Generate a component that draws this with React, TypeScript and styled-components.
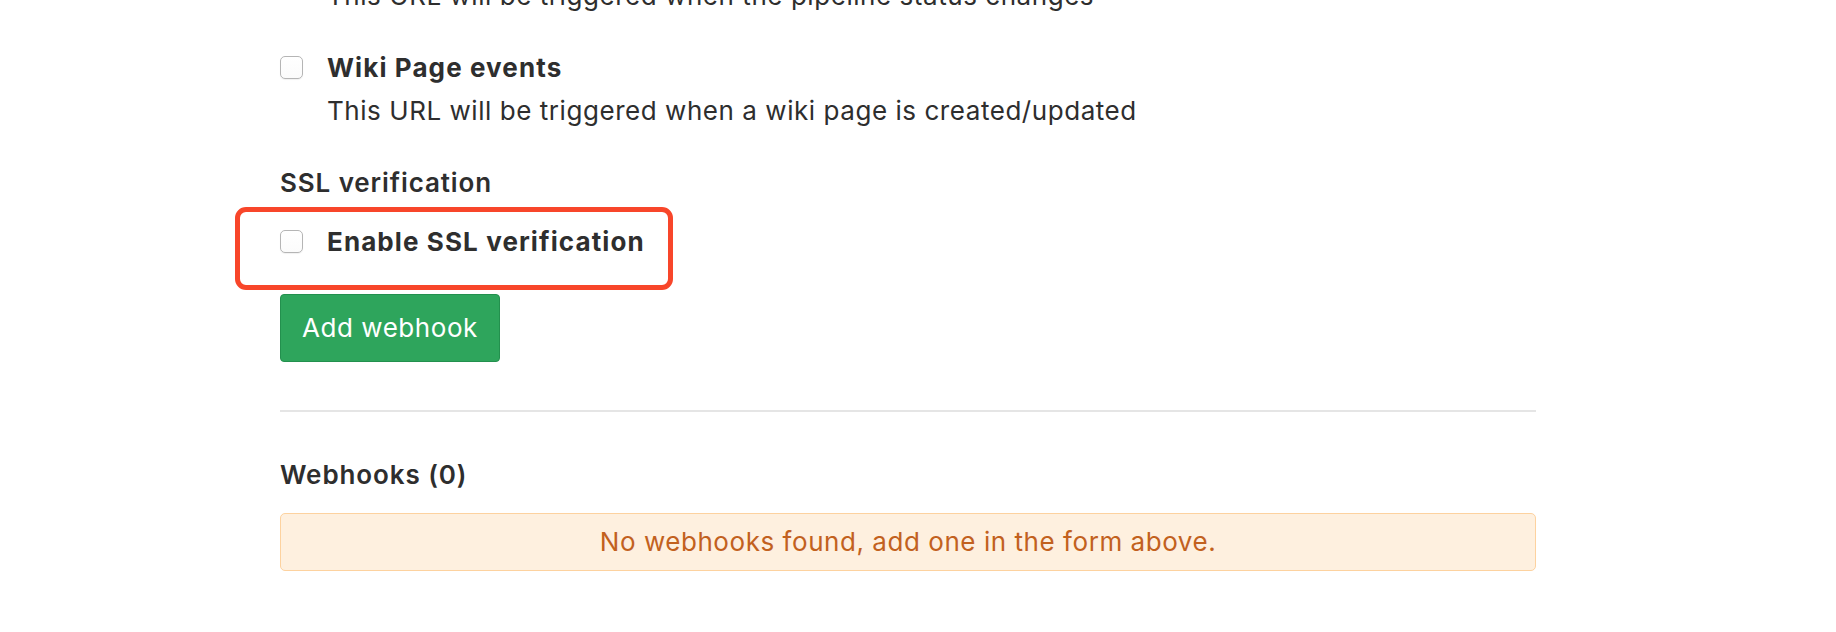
import React from "react";
import styled, { createGlobalStyle } from "styled-components";

const Global = createGlobalStyle`
  html, body { margin: 0; padding: 0; background: #ffffff; }
  body {
    font-family: Inter, "Noto Sans", "Liberation Sans", sans-serif;
    font-size: 26px;
    line-height: 36px;
    letter-spacing: 0.55px;
    color: #2e2e2e;
    overflow: hidden;
  }
  * { box-sizing: border-box; }
`;

const Page = styled.div`
  width: 1836px;
  height: 632px;
  overflow: hidden;
`;

const Content = styled.div`
  width: 1256px;
  margin-left: 280px;
  margin-top: -22px;
  display: flex;
  flex-direction: column;
  align-items: flex-start;
`;

const HelpText = styled.div<{ $indent?: boolean }>`
  padding-left: ${(p) => (p.$indent ? "47px" : "0")};
  margin-top: ${(p) => (p.$indent ? "0" : "7px")};
  font-weight: 400;
  white-space: nowrap;
`;

const Option = styled.div<{ $gap?: number }>`
  display: flex;
  align-items: flex-start;
  margin-top: ${(p) => p.$gap ?? 0}px;
`;

const Check = styled.input.attrs({ type: "checkbox" })`
  appearance: none;
  -webkit-appearance: none;
  width: 23px;
  height: 23px;
  margin: 6px 24px 0 0;
  flex: none;
  border: 1px solid #b5b5b5;
  border-radius: 5px;
  background: linear-gradient(#ffffff, #fbfbfb);
  box-shadow: 0 1px 1px rgba(0, 0, 0, 0.06);
`;

const OptionBody = styled.div`
  display: flex;
  flex-direction: column;
`;

const Label = styled.label`
  font-weight: 700;
  letter-spacing: 1.1px;
  white-space: nowrap;
`;

const Heading = styled.div<{ $gap: number }>`
  font-weight: 600;
  letter-spacing: 0.9px;
  margin-top: ${(p) => p.$gap}px;
  white-space: nowrap;
`;

const Highlight = styled.div`
  margin-top: 6px;
  margin-left: -45px;
  padding: 12px 23px 25px 40px;
  border: 5px solid #f8462a;
  border-radius: 11px;
`;

const Button = styled.button`
  margin-top: 4px;
  font: inherit;
  line-height: 36px;
  letter-spacing: 0.55px;
  color: #ffffff;
  background: #2ea55c;
  border: 1px solid #23904e;
  border-radius: 4px;
  padding: 15px 21px;
`;

const Divider = styled.hr`
  align-self: stretch;
  margin: 48px 0 0;
  border: 0;
  height: 2px;
  background: #e5e5e5;
`;

const Alert = styled.div`
  align-self: stretch;
  margin-top: 20px;
  padding: 10px 16px;
  text-align: center;
  color: #c2611e;
  background: #fef0df;
  border: 1px solid #fdd29f;
  border-radius: 5px;
`;

export default function App() {
  return (
    <Page>
      <Global />
      <Content>
        <HelpText $indent>This URL will be triggered when the pipeline status changes</HelpText>
        <Option $gap={36}>
          <Check />
          <OptionBody>
            <Label>Wiki Page events</Label>
            <HelpText>This URL will be triggered when a wiki page is created/updated</HelpText>
          </OptionBody>
        </Option>
        <Heading $gap={36}>SSL verification</Heading>
        <Highlight>
          <Option>
            <Check />
            <Label>Enable SSL verification</Label>
          </Option>
        </Highlight>
        <Button>Add webhook</Button>
        <Divider />
        <Heading $gap={45}>Webhooks (0)</Heading>
        <Alert>No webhooks found, add one in the form above.</Alert>
      </Content>
    </Page>
  );
}
